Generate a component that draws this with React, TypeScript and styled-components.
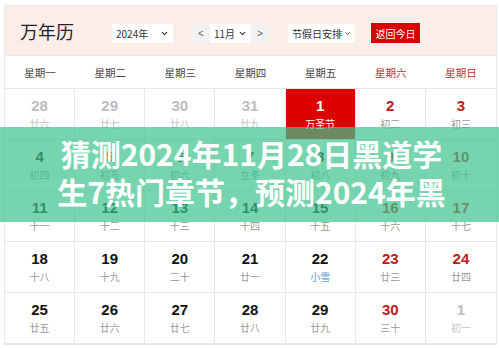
import styled, { createGlobalStyle } from 'styled-components';

type Day = {
  num: number;
  lunar: string;
  muted?: boolean;
  weekend?: boolean;
  today?: boolean;
  term?: boolean;
};

const weekdays = ['星期一', '星期二', '星期三', '星期四', '星期五', '星期六', '星期日'];

const rows: Day[][] = [
  [
    { num: 28, lunar: '廿六', muted: true },
    { num: 29, lunar: '廿七', muted: true },
    { num: 30, lunar: '廿八', muted: true },
    { num: 31, lunar: '廿九', muted: true },
    { num: 1, lunar: '万圣节', today: true },
    { num: 2, lunar: '初二', weekend: true },
    { num: 3, lunar: '初三', weekend: true },
  ],
  [
    { num: 4, lunar: '初四' },
    { num: 5, lunar: '初五' },
    { num: 6, lunar: '初六' },
    { num: 7, lunar: '立冬', term: true },
    { num: 8, lunar: '初八' },
    { num: 9, lunar: '初九', weekend: true },
    { num: 10, lunar: '初十', weekend: true },
  ],
  [
    { num: 11, lunar: '十一' },
    { num: 12, lunar: '十二' },
    { num: 13, lunar: '十三' },
    { num: 14, lunar: '十四' },
    { num: 15, lunar: '十五' },
    { num: 16, lunar: '十六', weekend: true },
    { num: 17, lunar: '十七', weekend: true },
  ],
  [
    { num: 18, lunar: '十八' },
    { num: 19, lunar: '十九' },
    { num: 20, lunar: '二十' },
    { num: 21, lunar: '廿一' },
    { num: 22, lunar: '小雪', term: true },
    { num: 23, lunar: '廿三', weekend: true },
    { num: 24, lunar: '廿四', weekend: true },
  ],
  [
    { num: 25, lunar: '廿五' },
    { num: 26, lunar: '廿六' },
    { num: 27, lunar: '廿七' },
    { num: 28, lunar: '廿八' },
    { num: 29, lunar: '廿九' },
    { num: 30, lunar: '三十', weekend: true },
    { num: 1, lunar: '初一', muted: true },
  ],
];

const Chevron = () => (
  <svg width="9" height="9" viewBox="0 0 24 24" fill="none" stroke="#333" strokeWidth="3" strokeLinecap="round" strokeLinejoin="round">
    <path d="m6 9 6 6 6-6" />
  </svg>
);

export default function App() {
  return (
    <>
      <GlobalStyle />
      <Page>
        <Calendar>
          <Header>
            <Title>万年历</Title>
            <Controls>
              <Select width={61}>
                2024年
                <Chevron />
              </Select>
              <MonthGroup>
                <StepButton>&lt;</StepButton>
                <Select width={41}>
                  11月
                  <Chevron />
                </Select>
                <StepButton>&gt;</StepButton>
              </MonthGroup>
              <Select width={67}>
                节假日安排
                <Chevron />
              </Select>
              <TodayButton>返回今日</TodayButton>
            </Controls>
          </Header>
          <WeekRow>
            {weekdays.map((w, i) => (
              <WeekName key={w} weekend={i > 4}>
                {w}
              </WeekName>
            ))}
          </WeekRow>
          <DayGrid>
            {rows.flat().map((d, i) => (
              <Cell key={i} today={d.today} lastCol={i % 7 === 6}>
                <DayNum today={d.today} muted={d.muted} weekend={d.weekend}>
                  {d.num}
                </DayNum>
                <Lunar today={d.today} muted={d.muted} term={d.term}>
                  {d.lunar}
                </Lunar>
              </Cell>
            ))}
          </DayGrid>
        </Calendar>
        <Banner>
          <BannerTitle>
            猜测2024年11月28日黑道学
            <br />
            生7热门章节，预测2024年黑
          </BannerTitle>
        </Banner>
      </Page>
    </>
  );
}

const GlobalStyle = createGlobalStyle`
  body {
    margin: 0;
    background: #fff;
    font-family: 'Noto Sans CJK SC', 'Liberation Sans', sans-serif;
  }
`;

const Page = styled.div`
  position: relative;
  width: 499px;
  height: 348px;
  overflow: hidden;
  padding: 5px 0 0 4px;
  box-sizing: border-box;
`;

const Calendar = styled.div`
  width: 493px;
  border: 1px solid #e8e8e8;
  box-sizing: border-box;
`;

const Header = styled.div`
  height: 49px;
  background: #fbeee9;
  display: flex;
  align-items: center;
  padding-left: 15px;
  border-bottom: 1px solid #f0e4e0;
`;

const Title = styled.h1`
  margin: 0;
  font-size: 18px;
  font-weight: 400;
  color: #222;
  width: 92px;
`;

const Controls = styled.div`
  display: flex;
  align-items: center;
  gap: 19px;
  padding-top: 5px;
`;

const Select = styled.div<{ width: number }>`
  width: ${({ width }) => width}px;
  height: 19px;
  background: #fff;
  display: flex;
  align-items: center;
  justify-content: space-between;
  gap: 2px;
  padding: 0 4px 0 4px;
  box-sizing: border-box;
  font-size: 10px;
  color: #333;
  white-space: nowrap;
  flex-shrink: 0;
`;

const MonthGroup = styled.div`
  display: flex;
  align-items: center;
`;

const StepButton = styled.div`
  width: 18px;
  height: 19px;
  background: #f4f2f1;
  color: #666;
  font-size: 10px;
  display: flex;
  align-items: center;
  justify-content: center;
  font-family: 'Liberation Sans', sans-serif;
`;

const TodayButton = styled.div`
  margin-left: -3px;
  width: 49px;
  height: 20px;
  background: #d90000;
  color: #fff;
  font-size: 10px;
  display: flex;
  align-items: center;
  justify-content: center;
  white-space: nowrap;
`;

const WeekRow = styled.div`
  display: grid;
  grid-template-columns: repeat(7, 1fr);
  height: 33px;
  align-items: center;
  border-bottom: 1px solid #e8e8e8;
  box-sizing: border-box;
`;

const WeekName = styled.div<{ weekend?: boolean }>`
  text-align: center;
  font-size: 10.5px;
  color: ${({ weekend }) => (weekend ? '#c8302f' : '#444')};
`;

const DayGrid = styled.div`
  display: grid;
  grid-template-columns: repeat(7, 1fr);
  grid-auto-rows: 51px;
`;

const Cell = styled.div<{ today?: boolean; lastCol?: boolean }>`
  display: flex;
  flex-direction: column;
  align-items: center;
  padding-top: 8px;
  box-sizing: border-box;
  background: ${({ today }) => (today ? '#dd0000' : '#fff')};
  border-bottom: 1px solid #e8e8e8;
  border-right: ${({ lastCol }) => (lastCol ? 'none' : '1px solid #e8e8e8')};
`;

const DayNum = styled.div<{ today?: boolean; muted?: boolean; weekend?: boolean }>`
  font-family: 'Liberation Sans', Arial, sans-serif;
  font-weight: 700;
  font-size: 15px;
  line-height: 18px;
  color: ${({ today, muted, weekend }) =>
    today ? '#fff' : muted ? '#bdbdbd' : weekend ? '#c01818' : '#111'};
`;

const Lunar = styled.div<{ today?: boolean; muted?: boolean; term?: boolean }>`
  margin-top: 2px;
  font-size: 10px;
  line-height: 14px;
  color: ${({ today, muted, term }) =>
    today ? '#fff' : term ? '#5a9ccc' : muted ? '#c4c4c4' : '#999'};
`;

const Banner = styled.div`
  position: absolute;
  left: 0;
  right: 0;
  top: 127px;
  height: 95px;
  background: rgba(60, 195, 140, 0.7);
  padding-top: 7px;
  box-sizing: border-box;
`;

const BannerTitle = styled.h2`
  margin: 0;
  text-align: center;
  color: #fff;
  font-family: 'Noto Sans CJK SC', sans-serif;
  font-weight: 700;
  font-size: 30px;
  line-height: 38px;
  padding-left: 4px;
`;
